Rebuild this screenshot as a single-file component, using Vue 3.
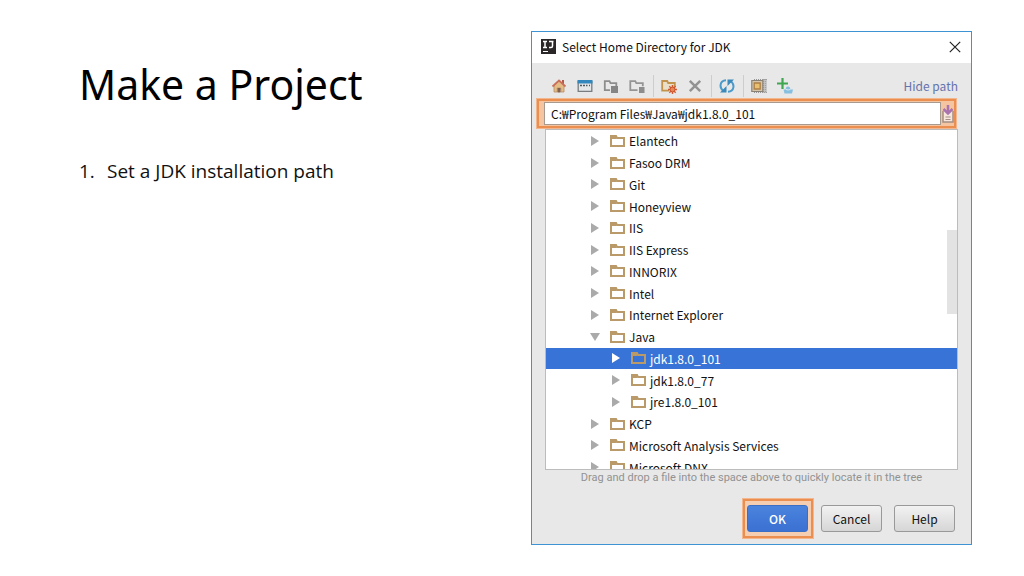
<script setup>
import { ref } from 'vue'

const path = ref('C:₩Program Files₩Java₩jdk1.8.0_101')
const selected = ref('jdk1.8.0_101')
const rows = [
  { name: 'Elantech' },
  { name: 'Fasoo DRM' },
  { name: 'Git' },
  { name: 'Honeyview' },
  { name: 'IIS' },
  { name: 'IIS Express' },
  { name: 'INNORIX' },
  { name: 'Intel' },
  { name: 'Internet Explorer' },
  { name: 'Java', open: true },
  { name: 'jdk1.8.0_101', child: true },
  { name: 'jdk1.8.0_77', child: true },
  { name: 'jre1.8.0_101', child: true },
  { name: 'KCP' },
  { name: 'Microsoft Analysis Services' },
  { name: 'Microsoft DNX' },
]
</script>

<template>
  <main class="slide">
    <section class="notes">
      <h1>Make a Project</h1>
      <ol>
        <li><span class="num">1.</span><span>Set a JDK installation path</span></li>
      </ol>
    </section>

    <section class="dialog" role="dialog" aria-labelledby="dialog-title">
      <header class="titlebar">
        <svg class="logo" viewBox="0 0 15 15" aria-hidden="true">
          <rect width="15" height="15" fill="#2b2729" />
          <path d="M2 2.5h4M4 2.5v6M2 8.5h4M8 2.5h4.500M11.500 2.500v4.500q0 1.500-1.500 1.500H8" fill="none" stroke="#fff" stroke-width="1.500" />
          <path d="M2 12.500h5" stroke="#fff" stroke-width="1" />
        </svg>
        <h2 id="dialog-title">Select Home Directory for JDK</h2>
        <button class="close" type="button" aria-label="Close">
          <svg viewBox="0 0 12 12"><path d="M.8.800l10.400 10.400M11.200.800L.8 11.200" stroke="#222" stroke-width="1.200" /></svg>
        </button>
      </header>

      <div class="toolbar">
        <button class="tool" type="button" aria-label="Home">
          <svg viewBox="0 0 16 16">
            <path d="M3 7.500L8 3l5 4.500V14H9.800v-4H6.200v4H3z" fill="#e3bd85" stroke="#b98b62" stroke-width=".8" />
            <path d="M6.500 10h3v4.500h-3z" fill="#80614f" />
            <path d="M11 2h2v4h-2z" fill="#b5594a" />
            <path d="M1.500 8.500L8 2.500l6.500 6" fill="none" stroke="#c9705d" stroke-width="1.800" />
          </svg>
        </button>
        <button class="tool" type="button" aria-label="Desktop">
          <svg viewBox="0 0 16 16">
            <path d="M1.200 3v10.300h13.600V3" fill="#e4e7e8" stroke="#777d80" stroke-width="1.300" />
            <path d="M.5 2h15v3.500H.5z" fill="#3287bd" />
            <path d="M3 7.500h2M6 7.500h2M9 7.500h1.500M12 7.500h1" stroke="#4b5960" stroke-width="1.500" />
          </svg>
        </button>
        <button class="tool" type="button" aria-label="Project directory" disabled>
          <svg viewBox="0 0 16 16">
            <path d="M7 12.200H1.800V3.200h4.700l1 2h5.800v3" fill="none" stroke="#8d8d8d" stroke-width="1.800" />
            <path d="M8 8h7v7H8z" fill="#858585" />
          </svg>
        </button>
        <button class="tool" type="button" aria-label="Module directory" disabled>
          <svg viewBox="0 0 16 16">
            <path d="M8.500 12.200H1.300V3.200h5l1 2h6.500v3" fill="none" stroke="#949494" stroke-width="1.800" />
            <path d="M10 9h5.500v6H10z" fill="#8d8d8d" />
          </svg>
        </button>
        <span class="rule"></span>
        <button class="tool" type="button" aria-label="New folder">
          <svg viewBox="0 0 16 16">
            <path d="M8 12.700H1.200V3h5l1 2h6.600v4" fill="#eadfc9" stroke="#c2934c" stroke-width="1.800" />
            <path d="M11.500 7v9M7 11.500h9M8.300 8.300l6.400 6.400M14.700 8.300l-6.400 6.400" stroke="#d35b35" stroke-width="1.400" />
            <circle cx="11.500" cy="11.500" r="2.500" fill="#e58a55" stroke="#ca4e2e" />
          </svg>
        </button>
        <button class="tool" type="button" aria-label="Delete">
          <svg viewBox="0 0 16 16"><path d="M2.800 2.800l10.400 10.400M13.200 2.800L2.800 13.200" stroke="#929292" stroke-width="2.500" /></svg>
        </button>
        <span class="rule"></span>
        <button class="tool" type="button" aria-label="Refresh">
          <svg viewBox="0 0 16 16">
            <path d="M7 2.200C.5 2.500 0 10 4.500 13M9 13.800C15.500 13.500 16 6 11.500 3" fill="none" stroke="#4a9acb" stroke-width="2" />
            <path d="M1 14.500h6.500V8zM15 1.500H8.500V8z" fill="#3c8abc" />
          </svg>
        </button>
        <span class="rule"></span>
        <button class="tool" type="button" aria-label="Show hidden files">
          <svg viewBox="0 0 16 16">
            <path d="M3 1.500h13M3 14.500h13M12.500 1v14M14.500 1v14" stroke="#959595" stroke-width="1.200" stroke-dasharray="1 1" />
            <path d="M11.800 1h4v14h-4z" fill="#aaa" opacity=".6" />
            <path d="M.8 2.500h11v11H.8z" fill="#d5c6ab" stroke="#8a8175" stroke-width="1.200" />
            <path d="M3.200 5h6v6h-6z" fill="#e8c070" stroke="#ad7f46" stroke-width="1.300" />
          </svg>
        </button>
        <button class="tool" type="button" aria-label="Add root">
          <svg viewBox="0 0 16 16">
            <path d="M5.500 0v11M0 5.500h11" stroke="#41a650" stroke-width="2.200" />
            <path d="M6.500 11.500h2.200q0-3 2.300-3t2.300 3H16l-1 4H7.500z" fill="#86bfdf" />
            <path d="M9 11.500q2 1 4.300 0" fill="none" stroke="#dcecf4" />
          </svg>
        </button>
        <a class="hide" href="#path">Hide path</a>
      </div>

      <div class="pathrow">
        <input id="path" v-model="path" type="text" aria-label="Path" spellcheck="false" />
        <button class="history" type="button" aria-label="Recent paths">
          <svg viewBox="0 0 14 20">
            <path d="M2 7v11h10V7" fill="#f6e6dc" stroke="#a38d84" stroke-width="1.500" />
            <path d="M4.500 13h5M4.500 15.500h5" stroke="#a38d84" />
            <path d="M7 1v8M2.500 5L7 9.500 11.500 5" fill="none" stroke="#a873ae" stroke-width="2.500" />
          </svg>
        </button>
      </div>

      <div class="tree">
        <ul role="tree" aria-label="Directories">
          <li
            v-for="row in rows"
            :key="row.name"
            role="treeitem"
            :aria-selected="row.name === selected"
            :class="{ child: row.child, selected: row.name === selected }"
            @click="selected = row.name"
          >
            <svg class="arrow" viewBox="0 0 10 10" aria-hidden="true">
              <path :d="row.open ? 'M0 1h10L5 9z' : 'M1 0l8 5-8 5z'" fill="currentColor" />
            </svg>
            <svg class="folder" viewBox="0 0 15 12" aria-hidden="true">
              <path d="M1 11V1h5l1 2h7v8z" fill="none" stroke="#b99a68" stroke-width="2" />
              <path d="M1 2h5v2H1z" fill="#b99a68" />
            </svg>
            <span class="name">{{ row.name }}</span>
          </li>
        </ul>
        <div class="thumb"></div>
      </div>

      <p class="hint">Drag and drop a file into the space above to quickly locate it in the tree</p>

      <footer class="actions">
        <span class="ring"><button class="btn primary" type="button">OK</button></span>
        <button class="btn" type="button">Cancel</button>
        <button class="btn" type="button">Help</button>
      </footer>
    </section>
  </main>
</template>

<style>
body {
  margin: 0;
  background: #fff;
}
</style>

<style scoped>
* {
  box-sizing: border-box;
}
.slide {
  display: grid;
  grid-template-columns: 452fr 441fr;
  align-items: start;
  padding: 31px 52px 31px 79px;
  font-family: "Open Sans", "Noto Sans CJK KR", sans-serif;
  color: #111;
}
h1, h2, ol, ul, p {
  margin: 0;
  padding: 0;
  font-weight: 400;
}
ol, ul {
  list-style: none;
}
button, input {
  font: inherit;
  color: inherit;
  padding: 0;
  border: 0;
  background: none;
}
svg {
  display: block;
}
.notes {
  padding-top: 23px;
}
h1 {
  font-family: "Noto Sans", sans-serif;
  font-size: 41px;
  line-height: 60px;
  color: #000;
}
ol {
  padding-top: 43px;
  font-size: 19px;
  line-height: 28px;
}
ol li {
  display: flex;
}
.num {
  width: 28px;
}
.dialog {
  border: 1px solid #3e93d2;
  background: #e8e8e8;
  font-family: "Noto Sans CJK KR", "Noto Sans", sans-serif;
  font-size: 12px;
  line-height: 20px;
}
.titlebar {
  display: flex;
  align-items: center;
  height: 31px;
  padding: 0 10px 2px 9px;
  background: #fff;
}
.logo {
  width: 15px;
  height: 15px;
}
h2 {
  flex: 1;
  padding-left: 6px;
  font-size: 12px;
}
.close, .close svg {
  width: 12px;
  height: 12px;
}
.toolbar {
  display: flex;
  align-items: center;
  gap: 10px;
  height: 36px;
  padding: 10px 13px 0 19px;
}
.tool, .tool svg {
  width: 16px;
  height: 16px;
}
.rule {
  width: 1px;
  height: 22px;
  margin: 0 -3px 0 -2px;
  background: #cdcdcd;
}
.hide {
  margin-left: auto;
  color: #6673ad;
  text-decoration: none;
}
.pathrow {
  display: flex;
  height: 29px;
  margin: 0 15px 0 5px;
  padding: 1px 0 1px 5px;
  border: 2px solid #ea8f50;
  outline: 1px solid #f4b78d;
  background: #f5c4a1;
}
.pathrow input {
  flex: 1;
  min-width: 0;
  padding: 1px 6px 0;
  border: 1px solid #a99a90;
  background: #fff;
  outline: 0;
}
.history {
  width: 14px;
  margin-right: -1px;
}
.history svg {
  width: 14px;
  height: 20px;
}
.tree {
  position: relative;
  height: 341px;
  margin: 1px 13px 0;
  overflow: hidden;
  border: 1px solid #bcbcbc;
  background: #fff;
}
.tree ul {
  display: grid;
  grid-auto-rows: 1fr;
  height: 348px;
}
.tree li {
  display: flex;
  align-items: center;
  padding-left: 44px;
}
.tree li.child {
  padding-left: 65px;
}
.name {
  padding-top: 1px;
}
.arrow {
  width: 10px;
  height: 10px;
  color: #aaa;
}
.folder {
  width: 15px;
  height: 12px;
  margin: 0 4px 0 10px;
}
.selected {
  background: #3874d8;
  color: #fff;
}
.selected .arrow {
  color: #fff;
}
.thumb {
  position: absolute;
  top: 100px;
  right: 0;
  width: 10px;
  height: 84px;
  background: #e3e3e3;
}
.hint {
  font-family: Roboto, sans-serif;
  font-size: 11px;
  line-height: 16px;
  text-align: center;
  color: #929292;
}
.actions {
  display: flex;
  justify-content: flex-end;
  align-items: center;
  gap: 12px;
  padding: 13px 16px 6px;
}
.btn {
  width: 61px;
  height: 27px;
  border: 1px solid #999;
  border-radius: 3px;
  background: linear-gradient(#f2f2f2, #d6d6d6);
}
.ring {
  display: flex;
  margin-right: -4px;
  padding: 4px 3px 4px 2px;
  border: 2px solid #ea8f50;
  outline: 1px solid #f4b78d;
  background: #f5cdb0;
}
.primary {
  border-color: #3b6fc6;
  background: linear-gradient(#4a83de, #3b71d2);
  color: #fff;
  font-weight: 500;
}
</style>
